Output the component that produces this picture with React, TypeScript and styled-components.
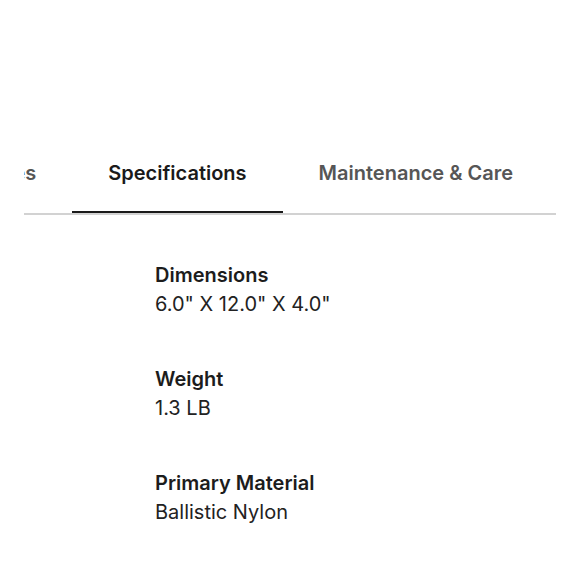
import React from "react";
import styled, { createGlobalStyle } from "styled-components";

const GlobalStyle = createGlobalStyle`
  html, body {
    margin: 0;
    padding: 0;
    background: #ffffff;
  }
  body {
    font-family: "Inter", "Noto Sans", sans-serif;
    color: #1c1c1c;
  }
`;

const Page = styled.div`
  width: 580px;
  height: 580px;
  box-sizing: border-box;
  padding: 161px 24px 0;
  overflow: hidden;
`;

const TabBar = styled.nav`
  display: flex;
  justify-content: flex-end;
  padding-right: 7px;
  border-bottom: 2px solid #d2d2d2;
  overflow: hidden;
`;

const Tab = styled.div<{ $active?: boolean }>`
  flex-shrink: 0;
  padding: 0 36px 26px;
  margin-bottom: -2px;
  font-size: 20px;
  line-height: 24px;
  font-weight: 600;
  white-space: nowrap;
  color: ${(p) => (p.$active ? "#1a1a1a" : "#565656")};
  border-bottom: 4px solid ${(p) => (p.$active ? "#1a1a1a" : "transparent")};
`;

const SpecList = styled.dl`
  display: flex;
  flex-direction: column;
  gap: 46px;
  margin: 0;
  padding: 46px 0 0 131px;
`;

const SpecItem = styled.div`
  display: flex;
  flex-direction: column;
`;

const SpecLabel = styled.dt`
  font-size: 20px;
  line-height: 29px;
  font-weight: 600;
  color: #1c1c1c;
`;

const SpecValue = styled.dd`
  margin: 0;
  font-size: 20px;
  line-height: 29px;
  font-weight: 400;
  color: #222222;
`;

const tabs = ["Features", "Specifications", "Maintenance & Care"];
const specs = [
  { label: "Dimensions", value: '6.0" X 12.0" X 4.0"' },
  { label: "Weight", value: "1.3 LB" },
  { label: "Primary Material", value: "Ballistic Nylon" },
];

export default function App() {
  return (
    <>
      <GlobalStyle />
      <Page>
        <TabBar>
          {tabs.map((t) => (
            <Tab key={t} $active={t === "Specifications"}>
              {t}
            </Tab>
          ))}
        </TabBar>
        <SpecList>
          {specs.map((s) => (
            <SpecItem key={s.label}>
              <SpecLabel>{s.label}</SpecLabel>
              <SpecValue>{s.value}</SpecValue>
            </SpecItem>
          ))}
        </SpecList>
      </Page>
    </>
  );
}
